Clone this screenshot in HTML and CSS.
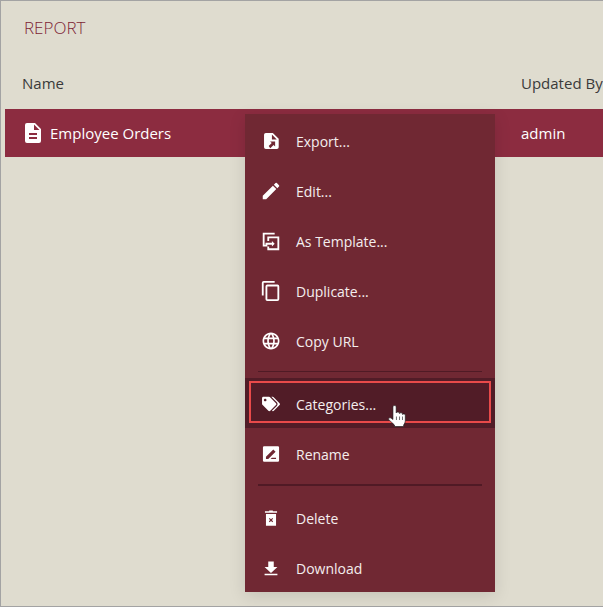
FILE: index.html
```html
<!doctype html>
<html lang="en">
<head>
    <meta charset="utf-8">
    <title>Report</title>
    <link rel="stylesheet" href="styles.css">
</head>
<body>
    <div class="page">
        <div class="title">REPORT</div>

        <div class="table-head">
            <div class="col-name">Name</div>
            <div class="col-user">Updated By</div>
        </div>

        <div class="table-row">
            <div class="col-name row-name">
                <svg class="row-icon" viewBox="0 0 24 24"><path fill="#fff" d="M14 2H6a2 2 0 0 0-2 2v16a2 2 0 0 0 2 2h12a2 2 0 0 0 2-2V8l-6-6zm2 16H8v-2h8v2zm0-4H8v-2h8v2zm-3-5V3.500L18.500 9H13z"/></svg>
                <span>Employee Orders</span>
            </div>
            <div class="col-user">admin</div>
        </div>

        <div class="menu">
            <div class="menu-item">
                <svg class="icon" viewBox="0 0 24 24"><path fill="#fff" fill-rule="evenodd" d="M14 3.300H6.400a2 2 0 0 0-2 2v13.400a2 2 0 0 0 2 2h12a2 2 0 0 0 2-2V9.500zM13 10.300V5l5.300 5.300zM9.500 17.500l3.300-3.300-1.800-1.700h5.500V18l-1.700-1.700-3.600 3.500z"/></svg>
                <span>Export...</span>
            </div>
            <div class="menu-item">
                <svg class="icon" viewBox="0 0 24 24"><path fill="#fff" d="M3 17.250V21h3.750L17.810 9.940l-3.750-3.750L3 17.250zM20.710 7.040a1 1 0 0 0 0-1.410l-2.340-2.340a1 1 0 0 0-1.410 0l-1.830 1.830 3.750 3.750 1.830-1.830z"/></svg>
                <span>Edit...</span>
            </div>
            <div class="menu-item">
                <svg class="icon" viewBox="0 0 24 24"><path fill="#fff" d="M3 3h13v2H5v11h3v2H3zM8 7h13v15H8v-4h2v2h9V9H10v3H8zM6 14h7v-2l3 3-3 3v-2H6z"/></svg>
                <span>As Template...</span>
            </div>
            <div class="menu-item">
                <svg class="icon" viewBox="0 0 24 24"><path fill="#fff" d="M16 1H4a2 2 0 0 0-2 2v14h2V3h12V1zm3 4H8a2 2 0 0 0-2 2v14a2 2 0 0 0 2 2h11a2 2 0 0 0 2-2V7a2 2 0 0 0-2-2zm0 16H8V7h11v14z"/></svg>
                <span>Duplicate...</span>
            </div>
            <div class="menu-item">
                <svg class="icon" viewBox="-1 -1 26 26"><path fill="#fff" d="M11.990 2C6.470 2 2 6.480 2 12s4.470 10 9.990 10C17.520 22 22 17.520 22 12S17.520 2 11.990 2zm6.930 6h-2.950a15.650 15.650 0 0 0-1.380-3.560A8.030 8.030 0 0 1 18.920 8zM12 4.040c.83 1.200 1.480 2.530 1.910 3.960h-3.820c.43-1.430 1.080-2.760 1.910-3.960zM4.260 14C4.100 13.360 4 12.690 4 12s.1-1.360.26-2h3.380c-.08.660-.14 1.320-.14 2s.06 1.340.14 2H4.260zm.82 2h2.950c.32 1.250.78 2.450 1.380 3.560A7.987 7.987 0 0 1 5.080 16zm2.950-8H5.080a7.987 7.987 0 0 1 4.330-3.560A15.650 15.650 0 0 0 8.030 8zM12 19.960c-.83-1.200-1.480-2.530-1.910-3.960h3.820c-.43 1.430-1.080 2.760-1.910 3.960zM14.340 14H9.660c-.09-.66-.16-1.320-.16-2s.07-1.350.16-2h4.680c.09.650.16 1.320.16 2s-.07 1.340-.16 2zm.25 5.560c.6-1.110 1.060-2.310 1.380-3.560h2.950a8.030 8.030 0 0 1-4.330 3.560zM16.360 14c.08-.66.14-1.320.14-2s-.06-1.340-.14-2h3.380c.16.640.26 1.310.26 2s-.1 1.360-.26 2h-3.380z"/></svg>
                <span>Copy URL</span>
            </div>

            <div class="menu-sep"></div>

            <div class="menu-item is-active">
                <svg class="icon" viewBox="-73 -137 786 786"><path fill="#fff" d="M497.941 225.941L286.059 14.059A48 48 0 0 0 252.118 0H48C21.490 0 0 21.490 0 48v204.118a48 48 0 0 0 14.059 33.941l211.882 211.882c18.744 18.745 49.136 18.746 67.882 0l204.118-204.118c18.745-18.745 18.745-49.137 0-67.882zM112 160c-26.510 0-48-21.490-48-48s21.490-48 48-48 48 21.490 48 48-21.490 48-48 48zm513.941 133.823L421.823 497.941c-18.745 18.745-49.137 18.745-67.882 0l-.360-.360L527.641 323.522c16.999-16.999 26.360-39.600 26.360-63.640s-9.362-46.641-26.360-63.640L331.397 0h48.721a48 48 0 0 1 33.941 14.059l211.882 211.882c18.745 18.745 18.745 49.137 0 67.882z"/></svg>
                <span>Categories...</span>
            </div>
            <div class="menu-item">
                <svg class="icon" viewBox="0 0 24 24"><path fill="#fff" fill-rule="evenodd" d="M4.500 3.500h15a1.300 1.300 0 0 1 1.300 1.300v14.400a1.300 1.300 0 0 1-1.300 1.300h-15a1.300 1.300 0 0 1-1.300-1.300V4.800a1.300 1.300 0 0 1 1.300-1.300zM6.500 17.500V15L14.500 7l2.500 2.500-8 8zM11.500 17.500h6V16h-4.500z"/></svg>
                <span>Rename</span>
            </div>

            <div class="menu-sep is-heavy"></div>

            <div class="menu-item">
                <svg class="icon" viewBox="0 0 24 24"><path fill="#fff" fill-rule="evenodd" d="M10 3.800h4v.7h4.600v1.800H5.400V4.500H10zM6.500 7.500h11v13h-11zM10.500 12l1.500 1.300 1.500-1.300.8.800-1.300 1.500 1.300 1.500-.8.800-1.500-1.300-1.500 1.300-.8-.8 1.300-1.500-1.300-1.500z"/></svg>
                <span>Delete</span>
            </div>
            <div class="menu-item">
                <svg class="icon" viewBox="0 0 24 24"><path fill="#fff" d="M19 11h-4V5H9v6H5l7 6.500 7-6.500zM5 18.300V20h14v-1.700z"/></svg>
                <span>Download</span>
            </div>

            <div class="focus-ring"></div>
            <svg class="hand" viewBox="1 0.5 13.500 23" preserveAspectRatio="none"><path fill="#fff" stroke="#111" stroke-width="0.5" stroke-linejoin="round" d="M4.500 2.200c0-1.500 2.300-1.500 2.300 0v6.300c.2-1.200 2.200-1.200 2.300 0v.6c.2-1.100 2.100-1.100 2.200.1v.8c.2-.9 2-.8 2 .5v5.500c0 2.200-.7 3.300-1.200 4.500v1.500H5.600v-1.500c-1-1.500-2.700-3.400-4-5.300-.8-1.100.6-2.500 1.700-1.500l1.200 1.300V2.200z"/><path stroke="#111" stroke-width=".5" d="M7 12v3.500M9.200 12v3.500M11.300 12v3.500"/></svg>
        </div>
    </div>
</body>
</html>
```

FILE: styles.css
```css
* {
    box-sizing: border-box;
}

html, body {
    margin: 0;
    height: 100%;
}

body {
    font-family: "Open Sans", sans-serif;
    font-size: 15px;
    background-color: #dfdccf;
    overflow: hidden;
}

.page {
    position: relative;
    width: 603px;
    height: 607px;
    border: solid #a3a3a3;
    border-width: 1px 0 1px 1px;
    padding: 0 0 0 4px;
}

.title {
    height: 54px;
    padding: 15px 0 0 19px;
    font-size: 17px;
    font-weight: 300;
    line-height: 24px;
    color: #7d1f35;
}

.table-head {
    display: flex;
    height: 54px;
    padding-top: 16px;
    line-height: 24px;
    color: #3a3a3a;
}

.col-name {
    width: 516px;
    flex: none;
    padding-left: 17px;
}

.col-user {
    white-space: nowrap;
}

.table-row {
    display: flex;
    align-items: center;
    height: 48px;
    background-color: #8c2c40;
    color: #fff;
}

.row-name {
    display: flex;
    align-items: center;
    gap: 5px;
}

.row-icon {
    width: 24px;
    height: 24px;
    margin-left: -1px;
}

/* dropdown over the table */
.menu {
    position: absolute;
    left: 244px;
    top: 113px;
    width: 250px;
    height: 478px;
    padding-top: 2px;
    overflow: hidden;
    font-size: 14px;
    background-color: #702833;
    color: #f4eeee;
    box-shadow: 0 4px 16px rgba(0, 0, 0, 0.12);
}

.menu-item {
    display: flex;
    align-items: center;
    height: 50px;
    padding-left: 15px;
}

.menu-item span {
    margin-left: 14px;
}

.icon {
    width: 22px;
    height: 22px;
    flex: none;
}

.menu-sep {
    height: 1px;
    margin: 5px 13px 6px;
    background-color: #501a25;
}

.is-heavy {
    height: 2px;
    margin-bottom: 7px;
}

.is-active {
    padding-top: 2px;
    margin-bottom: 1px;
    background-color: #511c27;
}

.focus-ring {
    position: absolute;
    left: 4px;
    top: 267px;
    width: 242px;
    height: 42px;
    border: 2px solid #e84a4a;
}

.hand {
    position: absolute;
    left: 143px;
    top: 291px;
    width: 19px;
    height: 23px;
}
```
